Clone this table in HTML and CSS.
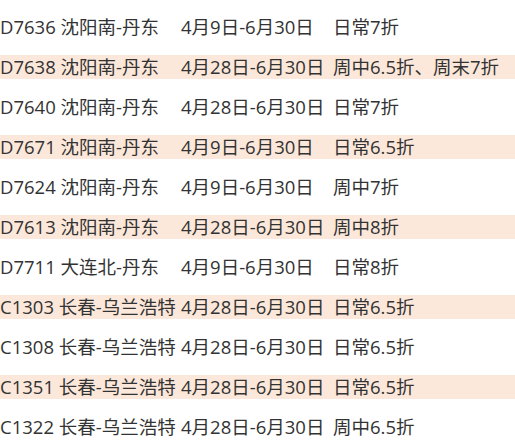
FILE: index.html
```html
<!DOCTYPE html>
<html lang="zh-CN">
<head>
<meta charset="utf-8">
<link rel="stylesheet" href="styles.css">
</head>
<body>
<div class="list">
  <div class="row"><span>D7636 沈阳南-丹东</span><span>4月9日-6月30日</span><span>日常7折</span></div>
  <div class="row"><span>D7638 沈阳南-丹东</span><span>4月28日-6月30日</span><span>周中6.5折、周末7折</span></div>
  <div class="row"><span>D7640 沈阳南-丹东</span><span>4月28日-6月30日</span><span>日常7折</span></div>
  <div class="row"><span>D7671 沈阳南-丹东</span><span>4月9日-6月30日</span><span>日常6.5折</span></div>
  <div class="row"><span>D7624 沈阳南-丹东</span><span>4月9日-6月30日</span><span>周中7折</span></div>
  <div class="row"><span>D7613 沈阳南-丹东</span><span>4月28日-6月30日</span><span>周中8折</span></div>
  <div class="row"><span>D7711 大连北-丹东</span><span>4月9日-6月30日</span><span>日常8折</span></div>
  <div class="row"><span>C1303 长春-乌兰浩特</span><span>4月28日-6月30日</span><span>日常6.5折</span></div>
  <div class="row"><span>C1308 长春-乌兰浩特</span><span>4月28日-6月30日</span><span>日常6.5折</span></div>
  <div class="row"><span>C1351 长春-乌兰浩特</span><span>4月28日-6月30日</span><span>日常6.5折</span></div>
  <div class="row"><span>C1322 长春-乌兰浩特</span><span>4月28日-6月30日</span><span>周中6.5折</span></div>
</div>
</body>
</html>
```

FILE: styles.css
```css
html, body {
  margin: 0;
  padding: 0;
  background: #ffffff;
}

body {
  font-family: "Open Sans", "Noto Sans CJK SC", sans-serif;
  font-size: 18.5px;
  color: #333333;
}

.list {
  display: flex;
  flex-direction: column;
  gap: 16px;
  padding-top: 15px;
}

.row {
  display: grid;
  grid-template-columns: 181px 152px 1fr;
  height: 24px;
  line-height: 24px;
  white-space: nowrap;
}

.row:nth-child(even) {
  background: #fce8da;
}
```
